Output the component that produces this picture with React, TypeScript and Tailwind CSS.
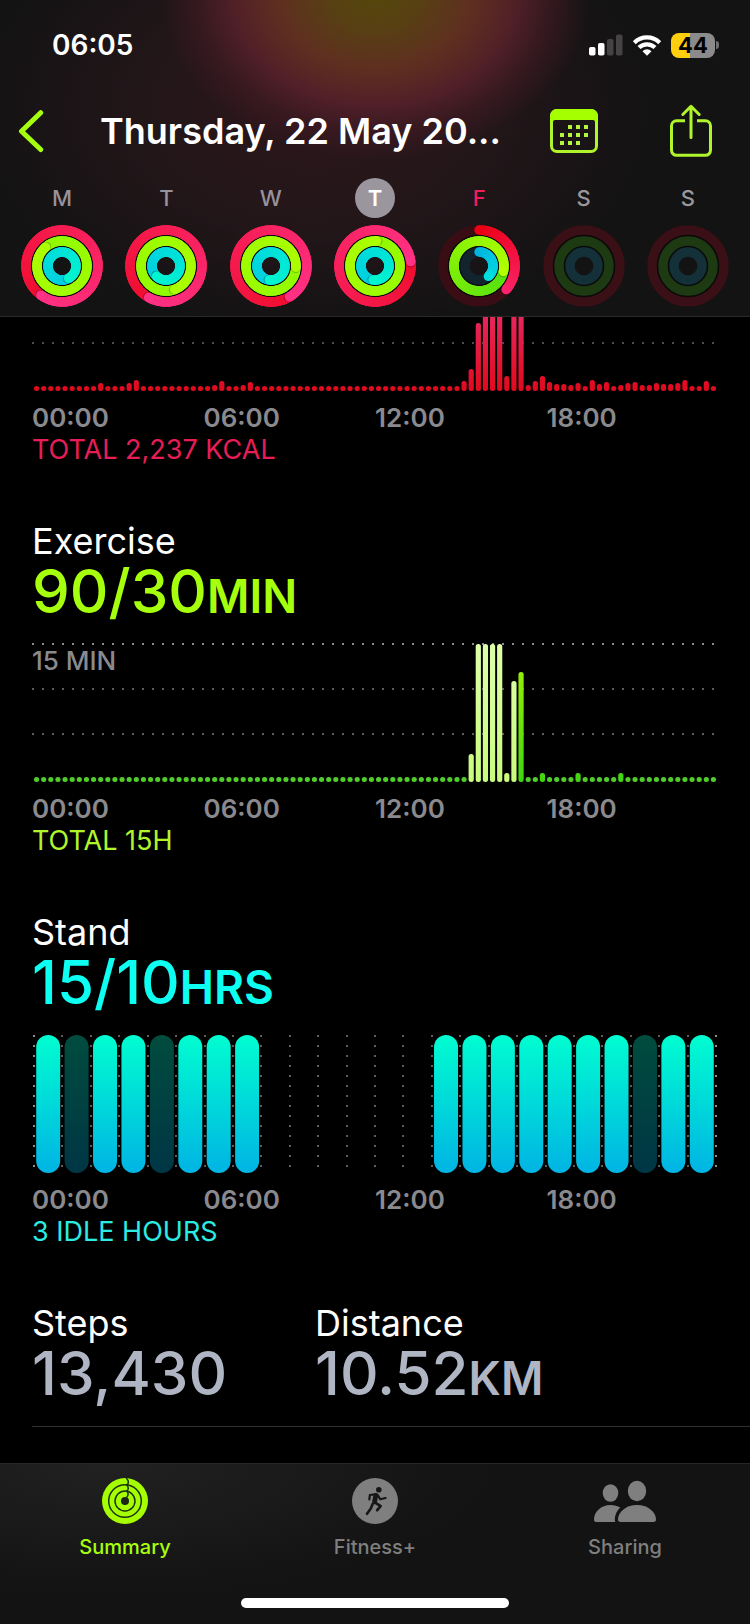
import React from "react";

type Rgb = [number, number, number];

interface RingSpec {
  end: number;
  lapped: boolean;
  from: Rgb;
  to: Rgb;
  track: string;
}

interface Day {
  letter: string;
  name: string;
  state?: "selected" | "today" | "future";
  rings: RingSpec[];
}

const RADII = [36, 25, 14];
const TRACKS = ["#3a0f16", "#1d3a12", "#143039"];
const RED: Rgb = [240, 14, 48];
const PINK: Rgb = [255, 50, 135];

function lapped(move: number, exercise: number, stand: number): RingSpec[] {
  return [
    { end: move, lapped: true, from: RED, to: PINK, track: TRACKS[0] },
    { end: exercise, lapped: true, from: [145, 250, 0], to: [172, 255, 0], track: TRACKS[1] },
    { end: stand, lapped: true, from: [0, 205, 225], to: [0, 245, 208], track: TRACKS[2] },
  ];
}

const EMPTY: RingSpec[] = TRACKS.map((track) => ({
  end: 0,
  lapped: false,
  from: RED,
  to: PINK,
  track,
}));

const DAYS: Day[] = [
  { letter: "M", name: "Monday", rings: lapped(216, 319, 152) },
  { letter: "T", name: "Tuesday", rings: lapped(209, 160, 223) },
  { letter: "W", name: "Wednesday", rings: lapped(149, 93, 187) },
  { letter: "T", name: "Thursday", state: "selected", rings: lapped(83, 4, 188) },
  {
    letter: "F",
    name: "Friday",
    state: "today",
    rings: [
      { end: 131, lapped: false, from: [235, 0, 20], to: [250, 35, 105], track: "#3a0d14" },
      { end: 103, lapped: true, from: [85, 225, 15], to: [178, 255, 0], track: TRACKS[1] },
      { end: 138, lapped: false, from: [0, 182, 225], to: [0, 222, 222], track: "#12242e" },
    ],
  },
  { letter: "S", name: "Saturday", state: "future", rings: EMPTY },
  { letter: "S", name: "Sunday", state: "future", rings: EMPTY },
];

function polar(r: number, deg: number): [number, number] {
  const a = ((deg - 90) * Math.PI) / 180;
  return [41 + r * Math.cos(a), 41 + r * Math.sin(a)];
}

function mix(a: Rgb, b: Rgb, t: number) {
  return `rgb(${a.map((v, i) => Math.round(v + (b[i] - v) * t)).join(",")})`;
}

function Ring({ spec, r }: { spec: RingSpec; r: number }) {
  const w = 9.4;
  if (spec.end === 0) {
    return <circle cx="41" cy="41" r={r} fill="none" stroke={spec.track} strokeWidth={w} />;
  }
  const start = spec.lapped ? spec.end - 360 : 0;
  const steps = 40;
  const span = (spec.end - start) / steps;
  const [hx, hy] = polar(r, spec.end);
  const [sx, sy] = polar(r, spec.end + (3 * 57) / r);
  const [tx, ty] = polar(r, start);
  return (
    <g>
      {!spec.lapped && (
        <>
          <circle cx="41" cy="41" r={r} fill="none" stroke={spec.track} strokeWidth={w} />
          <circle cx={tx} cy={ty} r={w / 2} fill={mix(spec.from, spec.to, 0)} />
        </>
      )}
      {spec.lapped && (
        <circle cx="41" cy="41" r={r} fill="none" stroke={mix(spec.from, spec.to, 0.5)} strokeWidth={w} />
      )}
      {Array.from({ length: steps }, (_, i) => {
        const a = start + i * span;
        const [x1, y1] = polar(r, a);
        const [x2, y2] = polar(r, Math.min(a + span + 8, spec.end));
        return (
          <path
            key={i}
            d={`M${x1} ${y1}A${r} ${r} 0 0 1 ${x2} ${y2}`}
            fill="none"
            stroke={mix(spec.from, spec.to, i / steps)}
            strokeWidth={w}
          />
        );
      })}
      {spec.lapped && <circle cx={(hx + sx) / 2} cy={(hy + sy) / 2} r={w / 2 - 0.4} fill="#000" opacity="0.25" />}
      <circle cx={hx} cy={hy} r={w / 2} fill={mix(spec.from, spec.to, 1)} />
    </g>
  );
}

function Rings({ day }: { day: Day }) {
  return (
    <svg viewBox="0 0 82 82" className="size-[82px]" aria-hidden="true">
      <circle cx="41" cy="41" r="30.5" fill="none" stroke="#0b0a0a" strokeWidth="2" />
      <circle cx="41" cy="41" r="19.5" fill="none" stroke="#0b0a0a" strokeWidth="2" />
      {day.rings.map((spec, i) => (
        <Ring key={i} spec={spec} r={RADII[i]} />
      ))}
    </svg>
  );
}

function StatusBar() {
  return (
    <div className="flex h-[90px] items-center justify-between pr-[31px] pl-[52px]">
      <span className="text-[28px] font-semibold text-white">06:05</span>
      <div className="flex items-center gap-[9px]">
        <svg viewBox="0 0 34 22" className="h-[22px] w-[34px]" aria-label="Mobile signal">
          <rect x="0" y="13" width="6.5" height="8.5" rx="1.8" fill="#fff" />
          <rect x="9" y="9" width="6.5" height="12.5" rx="1.8" fill="#fff" />
          <rect x="18" y="5" width="6.5" height="16.5" rx="1.8" fill="#454344" />
          <rect x="27" y="0.5" width="6.5" height="21" rx="1.8" fill="#454344" />
        </svg>
        <svg viewBox="0 0 30 22" className="h-[22px] w-[30px]" aria-label="Wi-Fi">
          <g fill="none" stroke="#fff" strokeWidth="4.2">
            <path d="M2.3 8.7a18 18 0 0 1 25.4 0" />
            <path d="M7 13.6a11.4 11.4 0 0 1 16 0" />
          </g>
          <path d="M10.5 17.2a6.4 6.4 0 0 1 9 0L15 21.800z" fill="#fff" />
        </svg>
        <div className="flex items-center gap-px">
          <span className="flex h-[25px] w-[44px] items-center justify-center rounded-lg bg-linear-to-r from-[#fecf0f] from-44% to-[#8b8b8b] to-44% text-[22px] leading-none font-bold text-black">
            44
          </span>
          <span className="h-2 w-[3px] rounded-r-full bg-[#6f6f6f]" />
        </div>
      </div>
    </div>
  );
}

function Toolbar() {
  return (
    <div className="flex h-[82px] items-center pr-[37px] pl-[17px]">
      <button type="button" aria-label="Back" className="shrink-0">
        <svg viewBox="0 0 28 44" className="h-[44px] w-[28px]">
          <path
            d="M23.7 3.7L4.5 22.3l19.2 18.2"
            fill="none"
            stroke="#a6ff0d"
            strokeWidth="5"
            strokeLinecap="round"
            strokeLinejoin="round"
          />
        </svg>
      </button>
      <h1 className="ml-[55px] flex-1 text-[36px] font-semibold whitespace-nowrap text-white">
        Thursday, 22 May 20...
      </h1>
      <button type="button" aria-label="Calendar" className="mr-[71px] shrink-0">
        <svg viewBox="0 0 48 44" className="h-[44px] w-[48px]">
          <rect x="1.5" y="1.5" width="45" height="41" rx="5.5" fill="none" stroke="#b0f52c" strokeWidth="3" />
          <path d="M0 11V7a7 7 0 0 1 7-7h34a7 7 0 0 1 7 7v6H45a2 2 0 0 0-2-2H5a2 2 0 0 0-2 2H0z" fill="#a6ff00" />
          <g fill="#b4f540">
            {[20, 28, 36].map((x) => (
              <rect key={x} x={x - 2} y="16" width="4" height="4" />
            ))}
            {[12, 20, 28, 36].map((x) => (
              <rect key={x} x={x - 2} y="24" width="4" height="4" />
            ))}
            {[12, 20, 28].map((x) => (
              <rect key={x} x={x - 2} y="32" width="4" height="4" />
            ))}
          </g>
        </svg>
      </button>
      <button type="button" aria-label="Share" className="shrink-0">
        <svg viewBox="0 0 44 54" className="h-[54px] w-[44px]">
          <g fill="none" stroke="#b0f52c" strokeWidth="3" strokeLinecap="round" strokeLinejoin="round">
            <path
              d="M16 16.800H7.500a5 5 0 0 0-5 5v24.500a5 5 0 0 0 5 5h29a5 5 0 0 0 5-5v-24.500a5 5 0 0 0-5-5H28"
              strokeLinecap="butt"
            />
            <path d="M22 33.500V2.500M13.800 10.500L22 2.300l8.200 8.200" />
          </g>
        </svg>
      </button>
    </div>
  );
}

const LETTER_STYLE = {
  none: "text-[#98929a]",
  future: "text-[#98989d]",
  today: "text-[#f01c5c]",
  selected: "rounded-full bg-[#9b959d] font-semibold text-white",
};

function Week() {
  return (
    <div className="grid grid-cols-7 px-[10px] pt-1.5 pb-[9px]">
      {DAYS.map((day) => (
        <button
          key={day.name}
          type="button"
          aria-label={day.name}
          className="flex flex-col items-center gap-[7px]"
        >
          <span
            className={`flex size-10 items-center justify-center text-[22px] font-medium ${LETTER_STYLE[day.state ?? "none"]}`}
          >
            {day.letter}
          </span>
          <Rings day={day} />
        </button>
      ))}
    </div>
  );
}

const BASE = 5;
const SLOTS = 96;
const SLOT = 684 / SLOTS;

const MOVE: Record<number, number> = {
  9: 8, 13: 8, 14: 11, 25: 6, 26: 10, 29: 6, 30: 9,
  60: 10, 61: 22, 62: 68, 63: 120, 64: 120, 65: 120, 66: 15, 67: 120, 68: 120,
  69: 6, 70: 10, 71: 15, 72: 9, 73: 7, 74: 7, 75: 6, 76: 8, 78: 11, 79: 7, 80: 9,
  82: 6, 83: 8, 84: 9, 85: 6, 86: 6, 87: 8, 88: 7, 89: 7, 90: 8, 91: 11, 94: 10,
};

const EXERCISE: Record<number, number> = {
  61: 28, 62: 138, 63: 138, 64: 138, 65: 138, 66: 9, 67: 101, 68: 110, 71: 9, 76: 9, 82: 9,
};

function DottedRow({ y, color }: { y: number; color: string }) {
  return <line x1="-1" x2="683" y1={y} y2={y} stroke={color} strokeWidth="2" strokeDasharray="2 8" />;
}

function Bars({ data, height, fill }: { data: Record<number, number>; height: number; fill: (i: number) => string }) {
  return (
    <>
      {Array.from({ length: SLOTS }, (_, i) => {
        const h = data[i] ?? BASE;
        return (
          <rect
            key={i}
            x={i * SLOT + SLOT / 2 - 2.6}
            y={height - h}
            width="5.2"
            height={h}
            rx="2.5"
            fill={fill(i)}
          />
        );
      })}
    </>
  );
}

function MoveChart() {
  return (
    <svg viewBox="-1 0 686 74" className="block w-full" role="img" aria-label="Move by hour">
      <defs>
        <linearGradient id="move" gradientUnits="userSpaceOnUse" x1="0" y1="0" x2="0" y2="74">
          <stop offset="0" stopColor="#e6265c" />
          <stop offset="1" stopColor="#e00a1c" />
        </linearGradient>
      </defs>
      <DottedRow y={26} color="#4c4c4c" />
      <Bars data={MOVE} height={74} fill={() => "url(#move)"} />
    </svg>
  );
}

function ExerciseChart() {
  return (
    <svg viewBox="-1 0 686 138" className="block w-full overflow-visible" role="img" aria-label="Exercise by hour">
      <defs>
        <linearGradient id="exercise" gradientUnits="userSpaceOnUse" x1="0" y1="0" x2="0" y2="138">
          <stop offset="0" stopColor="#a8f500" />
          <stop offset="1" stopColor="#3fd60f" />
        </linearGradient>
        <linearGradient id="workout" gradientUnits="userSpaceOnUse" x1="0" y1="0" x2="0" y2="138">
          <stop offset="0" stopColor="#deffab" />
          <stop offset="1" stopColor="#c9fb7c" />
        </linearGradient>
      </defs>
      <DottedRow y={0} color="#8e8e8e" />
      <DottedRow y={45} color="#5c5c5c" />
      <DottedRow y={90} color="#5c5c5c" />
      <Bars
        data={EXERCISE}
        height={138}
        fill={(i) => (i >= 61 && i <= 67 ? "url(#workout)" : EXERCISE[i] ? "url(#exercise)" : "#50cc2c")}
      />
    </svg>
  );
}

const IDLE = [1, 4, 21];

function StandChart() {
  const slot = 682 / 24;
  return (
    <svg viewBox="-1 0 686 138" className="block w-full overflow-visible" role="img" aria-label="Stand by hour">
      <defs>
        <linearGradient id="stood" x1="0" y1="0" x2="0" y2="1">
          <stop offset="0" stopColor="#00fdd0" />
          <stop offset="1" stopColor="#00b4e4" />
        </linearGradient>
        <linearGradient id="idle" x1="0" y1="0" x2="0" y2="1">
          <stop offset="0" stopColor="#004c3e" />
          <stop offset="1" stopColor="#003645" />
        </linearGradient>
      </defs>
      {Array.from({ length: 25 }, (_, i) => {
        const x = Math.round(1 + i * slot);
        return (
          <line
            key={i}
            x1={x}
            x2={x}
            y1="0"
            y2="134"
            stroke={i === 0 || i === 24 ? "#8e8e8e" : "#5c5c5c"}
            strokeWidth="2"
            strokeDasharray="2 8"
          />
        );
      })}
      {Array.from({ length: 24 }, (_, i) =>
        i < 8 || i > 13 ? (
          <rect
            key={i}
            x={1 + i * slot + 2.2}
            y="0"
            width="24"
            height="138"
            rx="12"
            fill={IDLE.includes(i) ? "url(#idle)" : "url(#stood)"}
          />
        ) : null,
      )}
    </svg>
  );
}

function Axis({ note, color }: { note: string; color: string }) {
  return (
    <div className="mt-[11px]">
      <div className="grid grid-cols-4 text-[26px] leading-8 font-semibold text-[#8a8a8e]">
        {["00:00", "06:00", "12:00", "18:00"].map((t) => (
          <span key={t}>{t}</span>
        ))}
      </div>
      <p className={`text-[27px] leading-8 ${color}`}>{note}</p>
    </div>
  );
}

function Metric({ title, value, unit, color }: { title: string; value: string; unit?: string; color: string }) {
  return (
    <div>
      <h2 className="text-[36px] leading-[44px] text-white">{title}</h2>
      <p className={`text-[60px] leading-[56px] font-medium ${color}`}>
        {value}
        {unit && <span className="text-[46px] leading-none font-semibold">{unit}</span>}
      </p>
    </div>
  );
}

function TabBar() {
  return (
    <nav className="border-t border-[#272727] bg-[#131313] bg-[radial-gradient(380px_130px_at_110px_0px,#212121,transparent)]">
      <div className="grid grid-cols-3 pt-3.5 text-[20px] leading-6 font-medium text-[#7f7f7f]">
        <a href="#summary" aria-current="page" className="flex flex-col items-center gap-[11px] text-[#a6ff0d]">
          <svg viewBox="0 0 46 46" className="size-[46px]">
            <circle cx="23" cy="23" r="23" fill="#a6ff00" />
            <g fill="none" stroke="#1c3310" strokeWidth="1.5" strokeLinecap="round">
              <circle cx="23" cy="23" r="16.3" />
              <circle cx="23" cy="23" r="10" />
              <path d="M24.5 0.5q3.4 3 0.6 6.4M24.5 7q3.2 2.8 0.6 6M24.5 13q3 2.800 0.4 6" />
            </g>
            <circle cx="23" cy="23" r="4" fill="#1c2416" />
          </svg>
          Summary
        </a>
        <a href="#fitness" className="flex flex-col items-center gap-[11px]">
          <svg viewBox="0 0 46 46" className="size-[46px]">
            <circle cx="23" cy="23" r="23" fill="#7f7f7f" />
            <circle cx="26.8" cy="11.8" r="2.8" fill="#161616" />
            <g fill="none" stroke="#161616" strokeLinecap="round" strokeLinejoin="round">
              <path d="M17.3 21.5l.6-4.5 5-.6" strokeWidth="2.2" />
              <path d="M23.8 17.4l-1.2 6.4" strokeWidth="4.8" />
              <path d="M26 17.5l2.2 3.8 5.4-1.3" strokeWidth="2.2" />
              <path d="M23.2 24.6l5.4 3.6-3.4 4" strokeWidth="2.7" />
              <path d="M20.6 26l-1.8 4.6-3.8 5.2" strokeWidth="2.6" />
            </g>
          </svg>
          Fitness+
        </a>
        <a href="#sharing" className="flex flex-col items-center gap-[11px]">
          <svg viewBox="0 0 62 46" className="h-[46px] w-[62px]">
            <g fill="#7f7f7f">
              <ellipse cx="16.5" cy="15" rx="7.8" ry="8.8" />
              <ellipse cx="43" cy="13" rx="9.2" ry="10.2" />
              <path d="M2.3 44C.8 44 0 43.2 0 41.5 0 34 7 27 16.5 27c3.6 0 7 .9 9.7 2.5C22.6 33 20.8 37.4 20.8 41.5c0 .9.1 1.8.5 2.5z" />
              <path d="M26.5 44c-1.7 0-2.5-.9-2.5-2.5C24 34.5 31.5 27 43 27s19 7.5 19 14.5c0 1.600-.8 2.500-2.500 2.500z" />
            </g>
          </svg>
          Sharing
        </a>
      </div>
      <div className="flex justify-center pt-[39px] pb-4">
        <span className="h-2.5 w-[268px] rounded-full bg-white" />
      </div>
    </nav>
  );
}

export default function App() {
  return (
    <div className="flex min-h-screen flex-col bg-black font-['Inter',sans-serif]">
      <header className="border-b border-[#2b2a2b] bg-[#141314] bg-[radial-gradient(215px_165px_at_50%_-5px,#54470a_0%,#583f14_22%,#5e2f20_45%,#57212ae0_66%,#451b2599_82%,transparent_100%),radial-gradient(330px_220px_at_42%_110px,#2c161b,#231619_50%,transparent)]">
        <StatusBar />
        <Toolbar />
        <Week />
      </header>

      <main className="flex-1 px-8">
        <section>
          <MoveChart />
          <Axis note="TOTAL 2,237 KCAL" color="text-[#e61e58]" />
        </section>

        <section className="pt-[53px]">
          <Metric title="Exercise" value="90/30" unit="MIN" color="text-[#a6ff0d]" />
          <div className="relative mt-[25px]">
            <ExerciseChart />
            <span className="absolute top-0 left-0 text-[26px] leading-[34px] font-medium text-[#8a8a8e]">15 MIN</span>
          </div>
          <Axis note="TOTAL 15H" color="text-[#b0f52c]" />
        </section>

        <section className="pt-[53px]">
          <Metric title="Stand" value="15/10" unit="HRS" color="text-[#0dfff2]" />
          <div className="mt-[25px]">
            <StandChart />
          </div>
          <Axis note="3 IDLE HOURS" color="text-[#2cebe2]" />
        </section>

        <section className="-mr-8 mb-[36px] grid grid-cols-[283px_1fr] border-b border-[#303030] pt-[53px] pb-[25px]">
          <Metric title="Steps" value="13,430" color="text-[#b0b5c4]" />
          <Metric title="Distance" value="10.52" unit="KM" color="text-[#b0b5c4]" />
        </section>
      </main>

      <TabBar />
    </div>
  );
}
